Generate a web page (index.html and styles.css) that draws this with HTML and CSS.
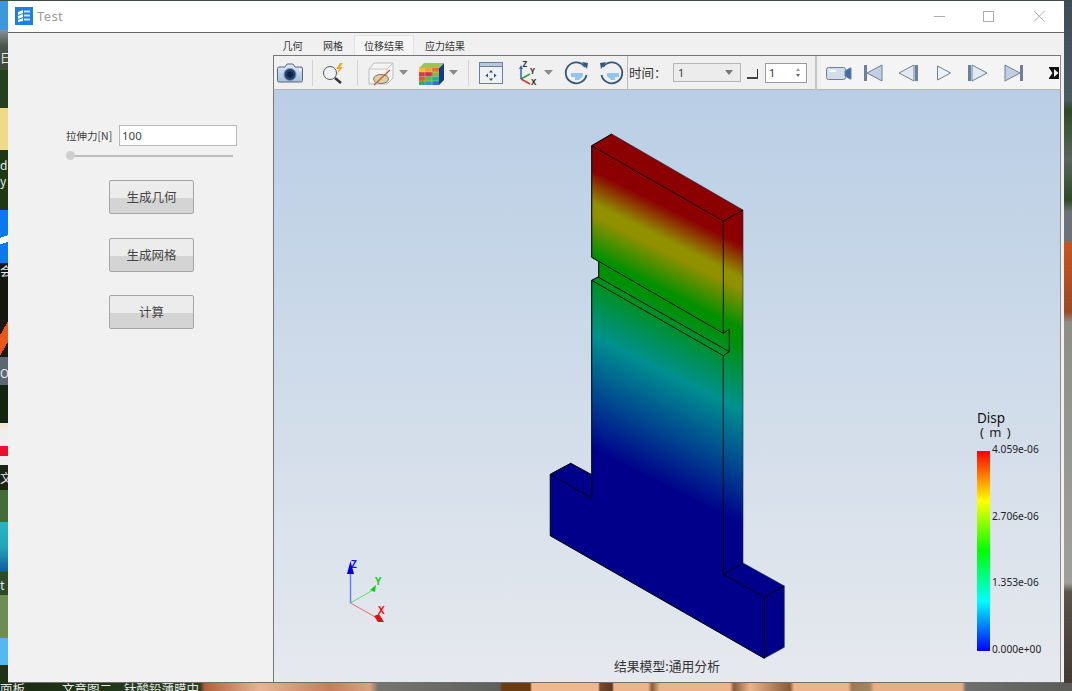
FILE: index.html
```html
<!DOCTYPE html>
<html lang="zh">
<head>
<meta charset="utf-8">
<title>Test</title>
<link rel="stylesheet" href="styles.css">
</head>
<body>
<div class="desktop">
  <div class="wall-left">
    <div class="wl wl-a"></div><div class="wl wl-b">日</div><div class="wl wl-c"></div><div class="wl wl-d"></div>
    <div class="wl wl-e">d<br>y</div><div class="wl wl-f"></div><div class="wl wl-g">会</div><div class="wl wl-h"></div>
    <div class="wl wl-i">O</div><div class="wl wl-c2"></div><div class="wl wl-j"></div><div class="wl wl-k">文</div>
    <div class="wl wl-c3"></div><div class="wl wl-l"></div><div class="wl wl-m">t</div><div class="wl wl-c4"></div>
    <div class="wl wl-n"></div><div class="wl wl-o"></div>
  </div>
  <div class="wall-right"></div>
  <div class="wall-top"></div>
  <div class="wall-bottom"><span class="dt1">面板</span><span class="dt2">文章图二</span><span class="dt3">钛酸铅薄膜中</span></div>

  <div class="window">
    <header class="titlebar">
      <svg class="appicon" width="18" height="18" viewBox="0 0 18 18"><rect width="18" height="18" fill="#1b7fe6"/><path d="M3 5l5-2v3l-5 2zM3 9l5-2v3l-5 2zM3 13l5-2v3l-5 1z" fill="#fff"/><path d="M9 3.500h6v2H9zM9 7.500h6v2H9zM9 11.500h6v2H9z" fill="#cfe4fa"/></svg>
      <span class="apptitle">Test</span>
      <div class="winctl">
        <svg class="wc" width="50" height="16" viewBox="0 0 50 16"><path d="M20 8.500h11" stroke="#adadad"/></svg>
        <svg class="wc" width="50" height="16" viewBox="0 0 50 16"><rect x="19.500" y="3.500" width="10" height="10" fill="none" stroke="#adadad"/></svg>
        <svg class="wc" width="50" height="16" viewBox="0 0 50 16"><path d="M20 3l10.500 10.500M30.500 3L20 13.500" stroke="#adadad" fill="none"/></svg>
      </div>
    </header>
    <div class="winbody">
      <aside class="leftpanel">
        <div class="paramrow">
          <label class="paramlabel">拉伸力[N]</label>
          <input class="paraminput" type="text" value="100">
        </div>
        <div class="slider"><span class="sliderthumb"></span></div>
        <button class="btn btn-first">生成几何</button>
        <button class="btn btn-second">生成网格</button>
        <button class="btn btn-third">计算</button>
      </aside>
      <main class="rightpane">
        <nav class="tabs">
          <span class="tab tab-1">几何</span>
          <span class="tab tab-2">网格</span>
          <span class="tab tab-active">位移结果</span>
          <span class="tab tab-4">应力结果</span>
        </nav>
        <div class="toolbar">
          <svg class="t-cam" width="32" height="24" viewBox="0 0 32 24"><defs><linearGradient id="cg" x1="0" y1="0" x2="0" y2="1"><stop offset="0" stop-color="#dfe9f5"/><stop offset="1" stop-color="#a9bfd9"/></linearGradient></defs><path d="M5 6h6l2-3h6l2 3h6q1.500 0 1.500 1.500v12q0 1.500-1.500 1.500H5q-1.500 0-1.500-1.500v-12Q3.500 6 5 6z" fill="url(#cg)" stroke="#54698a"/><circle cx="16" cy="13.500" r="6" fill="#20406f" stroke="#7d93b3"/><circle cx="16" cy="13.500" r="3" fill="#0e2146"/><circle cx="26" cy="9" r="1" fill="#fff"/></svg>
          <span class="sep sep-a"></span>
          <svg class="t-search" width="32" height="24" viewBox="0 0 32 24"><circle cx="13" cy="12" r="6.500" fill="#eef2f7" stroke="#555"/><path d="M18 17l6 5" stroke="#333" stroke-width="2.500"/><path d="M23 2l-4 6h3l-2 5 6-7h-3l3-4z" fill="#f2a72b"/></svg>
          <span class="sep sep-b"></span>
          <svg class="t-cube" width="44" height="24" viewBox="0 0 44 24"><path d="M7 8l5-6h19v15l-6 6H7z" fill="#f4f4f4" stroke="#bcbcbc"/><path d="M7 8h18v15M25 8l6-6" fill="none" stroke="#c8c8c8"/><ellipse cx="19" cy="18" rx="7.500" ry="4.500" fill="#d8d0a8" stroke="#777"/><path d="M12 24L28 9" stroke="#d9522f" stroke-width="1.200"/><path d="M37 9h9l-4.500 5z" fill="#8a8a8a"/></svg>
          <svg class="t-color" width="53" height="24" viewBox="0 0 53 24"><path d="M33 7l5-5v17l-5 5z" fill="#123a86"/><path d="M13 7l5-5h20l-5 5z" fill="#9ac654"/><rect x="13" y="7" width="20" height="17" fill="#2d6fd6"/><rect x="13" y="7" width="6.500" height="4" fill="#e6c42c"/><rect x="19.500" y="7" width="7" height="4" fill="#efa32a"/><rect x="26.500" y="7" width="6.500" height="4" fill="#e5752a"/><rect x="13" y="11" width="6.500" height="4.500" fill="#e03a2a"/><rect x="19.500" y="11" width="7" height="4.500" fill="#d9342a"/><rect x="26.500" y="11" width="6.500" height="4.500" fill="#8fb83a"/><rect x="13" y="15.500" width="6.500" height="4.500" fill="#e05a2a"/><rect x="19.500" y="15.500" width="7" height="4.500" fill="#62b735"/><rect x="26.500" y="15.500" width="6.500" height="4.500" fill="#2fae8b"/><rect x="13" y="20" width="6.500" height="4" fill="#2fae5b"/><rect x="19.500" y="20" width="7" height="4" fill="#2a9bd8"/><path d="M19 7v17M26 7v17M13 11h20M13 15.500h20M13 20h20" stroke="#fff" stroke-opacity=".25" fill="none"/><path d="M43 9h9l-4.500 5z" fill="#8a8a8a"/></svg>
          <span class="sep sep-c"></span>
          <svg class="t-fit" width="32" height="24" viewBox="0 0 32 24"><rect x="4.500" y="1.500" width="23" height="21" fill="#eef1f6" stroke="#6d7f9b"/><rect x="4.500" y="1.500" width="23" height="4" fill="#b8c8de" stroke="#6d7f9b"/><path d="M16 9l-2 2.500h4zM16 20l-2-2.500h4zM10.500 14.500l2.500-2v4zM21.500 14.500l-2.500-2v4z" fill="#2b4b78"/></svg>
          <svg class="t-axes" width="50" height="24" viewBox="0 0 50 24"><path d="M14 18V6" stroke="#2866c8" stroke-width="1.500"/><path d="M14 18l9-5" stroke="#1fa24a" stroke-width="1.500"/><path d="M14 18l9 5" stroke="#d9342a" stroke-width="1.500"/><path d="M14 4l-2 4h4z" fill="#2866c8"/><text x="15.500" y="6" class="axl">Z</text><text x="23" y="13" class="axl">Y</text><text x="24" y="24" class="axl">X</text><path d="M37 9h9l-4.500 5z" fill="#8a8a8a"/></svg>
          <svg class="t-rot1" width="36" height="24" viewBox="0 0 36 24"><path d="M27 6A10.500 10.500 0 1 0 28.500 14" fill="none" stroke="#33587f" stroke-width="1.800"/><path d="M24 1l6 1-1 6z" fill="#33587f"/><path d="M13 12h12v3l-4 4h-4v-3h-4z" fill="#8fc6ee"/></svg>
          <svg class="t-rot2" width="30" height="24" viewBox="0 0 30 24"><path d="M6 6A10.500 10.500 0 1 1 4.500 14" fill="none" stroke="#33587f" stroke-width="1.800"/><path d="M9 1L3 2l1 6z" fill="#33587f"/><path d="M10 12h12v4h-4v3h-4l-4-4z" fill="#8fc6ee"/></svg>
          <span class="sep sep-d"></span>
          <span class="timelabel">时间：</span>
          <span class="combo"><span>1</span><i class="comboarrow"></i></span>
          <span class="stepslot"><i class="stepicon"></i></span>
          <span class="spin"><span>1</span><span class="spinbtns"><i class="up"></i><i class="down"></i></span></span>
          <span class="sep sep-e"></span>
          <div class="playbar">
            <svg class="p-rec" width="36" height="20" viewBox="0 0 36 20"><rect x="5.500" y="4.500" width="19" height="12" rx="2" fill="#d3dce9" stroke="#6d7f9b"/><rect x="8" y="7" width="7" height="2" fill="#fff"/><path d="M24 8l5-3h1v11h-1l-5-3z" fill="#3d6ea8" stroke="#6d7f9b"/></svg>
            <svg class="p-icon" width="34" height="20" viewBox="0 0 34 20"><path d="M8.500 2v16" stroke="#6d7f9b" stroke-width="3"/><path d="M10 10L25 2v16z" fill="#c2cfe0" stroke="#6d7f9b"/></svg>
            <svg class="p-icon" width="34" height="20" viewBox="0 0 34 20"><path d="M25.500 2v16" stroke="#6d7f9b" stroke-width="3"/><path d="M23 2v16L8 10z" fill="#e3e9f1" stroke="#6d7f9b"/></svg>
            <svg class="p-icon p-play" width="34" height="20" viewBox="0 0 34 20"><path d="M10.500 3l13 7-13 7z" fill="#eef1f6" stroke="#6d7f9b"/></svg>
            <svg class="p-icon" width="34" height="20" viewBox="0 0 34 20"><path d="M8.500 2v16" stroke="#6d7f9b" stroke-width="3"/><path d="M11 2v16l15-8z" fill="#e3e9f1" stroke="#6d7f9b"/></svg>
            <svg class="p-icon p-last" width="34" height="20" viewBox="0 0 34 20"><path d="M25.500 2v16" stroke="#6d7f9b" stroke-width="3"/><path d="M9 2v16l15-8z" fill="#c2cfe0" stroke="#6d7f9b"/></svg>
            <svg class="p-more" width="10" height="12" viewBox="0 0 10 12"><rect width="10" height="12" fill="#111"/><path d="M0 1l3.500 5L0 11zM5 2l4.500 4L5 10z" fill="#f2f2f2"/></svg>
          </div>
        </div>
        <div class="viewport">
          <svg class="scene" width="787" height="591" viewBox="273 90 787 591">
            <defs>
              <linearGradient id="disp" gradientUnits="userSpaceOnUse" x1="592" y1="100" x2="392" y2="500">
                <stop offset="0.14" stop-color="#8b0000"/>
                <stop offset="0.205" stop-color="#909000"/>
                <stop offset="0.23" stop-color="#909000"/>
                <stop offset="0.31" stop-color="#009000"/>
                <stop offset="0.33" stop-color="#009000"/>
                <stop offset="0.47" stop-color="#009090"/>
                <stop offset="0.6" stop-color="#004090"/>
                <stop offset="0.7" stop-color="#00008b"/>
              </linearGradient>
            </defs>
            <polygon class="body3d" points="591.700,145.700 611.700,134 743,210 743,563 784.300,586 784.300,647.300 764.300,658.300 550.300,535.700 550.300,474.300 570.700,463.300 591.700,474.700 591.700,280.300 598.700,276.700 598.700,261.700 591.700,257.300"/>
            <path class="edges" d="M611.700 134L591.700 145.700V257.300L723.300 333.300V221L591.700 145.700M723.300 221L743 210M723.300 333.300L729.300 329.300V351.700L598 277M598.700 261.700V276.700L591.700 280.300L723.300 355.700L729.300 351.700M723.300 355.700V574.300L764.300 597.300L784.300 586M764.300 597.300V658.300L550.300 535.700V474.300L591.700 498.300V280.300M723.300 574.300L743 563M550.300 474.300L570.700 463.300L591.700 474.700"/>
            <path class="axis-z" d="M350.500 603V570"/><path class="axis-y" d="M350.500 603L373 590"/><path class="axis-x" d="M350.500 603L377 618"/>
            <path d="M350.500 561l3.500 13h-7z" fill="#0000e0"/><path d="M370 590l6-5-1 7z" fill="#11cc11"/><path d="M374 616l5-2 5 8-6 0z" fill="#e01010"/>
            <text class="tri tri-z" x="351" y="568">Z</text><text class="tri tri-y" x="375" y="585">Y</text><text class="tri tri-x" x="378" y="614">X</text>
          </svg>
          <div class="legend">
            <div class="legtitle">Disp</div>
            <div class="legunit">( m )</div>
            <div class="legrow">
              <div class="legbar"></div>
              <div class="legvals"><span>4.059e-06</span><span>2.706e-06</span><span>1.353e-06</span><span>0.000e+00</span></div>
            </div>
          </div>
          <div class="caption">结果模型:通用分析</div>
        </div>
      </main>
    </div>
  </div>
</div>
</body>
</html>
```
FILE: styles.css
```css
* { box-sizing: border-box; }
html, body { margin: 0; padding: 0; }
body { width: 1072px; height: 691px; overflow: hidden; font-family: "Noto Sans CJK SC", "Noto Sans", sans-serif; color: #333; }

.desktop { position: relative; width: 1072px; height: 691px; overflow: hidden; background: #26331e; }

/* Wallpaper and desktop icons peeking round the window */
.wall-left { position: absolute; left: 0; top: 0; width: 8px; height: 684px; display: flex; flex-direction: column; overflow: hidden; font-size: 12px; line-height: 16px; color: #e8e8e8; }
.wl { flex: none; overflow: hidden; }
.wl-a { height: 30px; background: #3c97dd; }
.wl-b { height: 40px; padding-top: 20px; background: linear-gradient(#8a9298, #4a5648 40%, #3a4a35); }
.wl-c { height: 38px; background: #24401f; }
.wl-d { height: 42px; background: #f1d98a; }
.wl-e { height: 60px; padding-top: 7px; background: #1e3814; }
.wl-f { height: 53px; background: linear-gradient(160deg, #0b78ee 50%, #fff 50%, #fff 62%, #0b78ee 62%); }
.wl-g { height: 57px; background: #14160f; }
.wl-h { height: 37px; background: linear-gradient(120deg, #1b1b14 30%, #e9571b 30%, #e9571b 70%, #1b1b14 70%); }
.wl-i { height: 28px; padding-top: 8px; background: #5d6672; }
.wl-c2 { height: 38px; background: #13240f; }
.wl-j { height: 42px; background: linear-gradient(#f2e8c8 0, #eee 20%, #eee 55%, #e8112d 55%, #e8112d 78%, #eee 78%); }
.wl-k { height: 25px; padding-top: 5px; background: #1c2616; }
.wl-c3 { height: 32px; background: #456b3a; }
.wl-l { height: 50px; background: linear-gradient(#29b6c8 0, #23a5b7 50%, #0e5aa6 100%); }
.wl-m { height: 23px; padding-top: 5px; background: #2d4b2a; }
.wl-c4 { height: 43px; background: #6d8d54; }
.wl-n { height: 27px; background: #55b8f0; }
.wl-o { height: 18px; background: #1f3417; }

.wall-right { position: absolute; left: 1064px; top: 0; width: 8px; height: 691px; background: linear-gradient(#3e4c58 0, #4b5a60 100px, #2f4a26 110px, #59665d 160px, #2f4a26 200px, #6b7378 212px, #6b7378 240px, #c8541f 244px, #9a4a26 312px, #8e8e88 322px, #a0a09a 583px, #59534a 592px, #3f3830 691px); }
.wall-top { position: absolute; left: 0; top: 0; width: 1072px; height: 1px; background: #3f4a45; }
.wall-bottom { position: absolute; left: 0; top: 683px; width: 1072px; height: 8px; overflow: hidden; font-size: 12.500px; line-height: 16px; color: #e6e6e6; white-space: nowrap;
  background: linear-gradient(90deg, #1a2c14 0, #2a3f20 200px, #b45f3c 205px, #e8b494 260px, #c77d5c 330px, #d9a27f 370px, #77756f 378px, #5f5f5d 500px, #6b3c12 502px, #6b3c12 530px, #f0b88e 532px, #f0b88e 598px, #7a4a2c 600px, #5a3a20 612px, #edb48b 614px, #edb48b 648px, #8c5a36 652px, #edb48b 660px, #edb48b 730px, #8a5a38 734px, #edb48b 750px, #8a5a38 790px, #edb48b 794px, #edb48b 848px, #9c7a55 852px, #a58660 870px, #e8ae85 874px, #e8ae85 962px, #6f6f6d 966px, #5b5b58 1072px); }
.wall-bottom span { position: absolute; top: -2px; }
.dt1 { left: 0; }
.dt2 { left: 62px; }
.dt3 { left: 124px; }

/* Window */
.window { position: absolute; left: 8px; top: 1px; width: 1056px; height: 682px; display: flex; flex-direction: column; background: #f0f0f0; border-bottom: 1px solid #6f6f6f; }
.titlebar { flex: none; height: 32px; display: flex; align-items: center; background: #fff; border-bottom: 1px solid #666; padding-left: 7px; padding-bottom: 1px; }
.appicon { flex: none; }
.apptitle { margin-left: 4px; font-family: "Noto Sans", sans-serif; font-size: 13px; letter-spacing: 0.400px; color: #9b9b9b; }
.winctl { margin-left: auto; display: flex; align-items: center; margin-top: -1px; }
.wc { display: block; flex: none; }

.winbody { flex: 1; display: flex; min-height: 0; }

/* Left panel */
.leftpanel { flex: none; width: 265px; padding-top: 92px; display: flex; flex-direction: column; align-items: flex-start; background: #f1f1f1; }
.paramrow { display: flex; align-items: center; padding-left: 58px; }
.paramlabel { width: 53px; font-size: 10.500px; color: #3d3d3d; white-space: nowrap; }
.paraminput { width: 118px; height: 21px; padding: 0 2px; border: 1px solid #b9b9b9; border-radius: 0; outline: none; background: #fff; font-family: "Noto Sans", sans-serif; font-size: 11.500px; color: #444; }
.slider { position: relative; margin: 9px 0 0 58px; width: 167px; height: 2px; background: #bdbdbd; }
.sliderthumb { position: absolute; left: 0; top: -4px; width: 9px; height: 9px; border-radius: 50%; background: #cfcfcf; }
.btn { width: 85px; height: 34px; margin-left: 101px; border: 1px solid #a6a6a6; border-radius: 2px; padding: 0 0 1px; font-family: "Noto Sans CJK SC", sans-serif; font-size: 12.500px; color: #444; background: linear-gradient(#ececec 0, #ececec 53%, #d4d4d4 53%, #d4d4d4 100%); }
.btn-first { margin-top: 23px; }
.btn-second { margin-top: 24px; }
.btn-third { margin-top: 23px; }

/* Right pane */
.rightpane { flex: 1; min-width: 0; display: flex; flex-direction: column; padding-right: 3px; }
.tabs { flex: none; height: 22px; display: flex; align-items: flex-end; font-size: 10px; color: #333; }
.tab { display: flex; align-items: center; justify-content: center; height: 20px; }
.tab-1 { width: 39px; }
.tab-2 { width: 42px; }
.tab-active { width: 60px; background: #f5f5f5; border: 1px solid #e4e4e4; border-bottom: 0; }
.tab-4 { width: 62px; }

.toolbar { flex: none; height: 35px; display: flex; align-items: center; background: #f0f0f0; border-top: 1px solid #767676; border-left: 1px solid #767676; border-right: 1px solid #8a8a8a; border-bottom: 1px solid #b4b4b4; }
.toolbar svg { display: block; flex: none; overflow: visible; }
.axl { font-family: "Noto Sans", sans-serif; font-size: 8px; fill: #333; font-weight: 700; }
.sep { flex: none; width: 1px; height: 26px; background: #d2d2d2; }
.sep-a { margin: 0 4px 0 6px; }
.sep-b { margin: 0 4px 0 8px; }
.sep-c { margin: 0 6px 0 9px; }
.sep-d { height: 34px; background: #b8b8b8; margin-left: 0; }
.sep-e { height: 34px; width: 2px; background: #c4c4c4; margin: 0 4px 0 8px; }
.t-rot1 { margin-left: 1px; }
.t-rot2 { margin-left: 3px; }
.timelabel { flex: none; width: 45px; font-size: 12.500px; color: #333; padding-left: 1px; white-space: nowrap; overflow: hidden; }
.combo { flex: none; width: 68px; height: 19px; display: flex; align-items: center; justify-content: space-between; padding: 0 7px 0 4px; border: 1px solid #b5b5b5; background: #ececec; font-family: "Noto Sans", sans-serif; font-size: 11px; color: #444; }
.comboarrow { width: 0; height: 0; border-left: 4px solid transparent; border-right: 4px solid transparent; border-top: 5px solid #777; }
.stepslot { flex: none; width: 24px; display: flex; justify-content: center; }
.stepicon { display: block; width: 11px; height: 10px; margin-top: 2px; margin-right: 1px; border-right: 1px solid #333; border-bottom: 2px solid #444; }
.spin { flex: none; width: 42px; height: 20px; display: flex; align-items: center; justify-content: space-between; padding: 0 6px 0 3px; border: 1px solid #9a9a9a; background: #fff; font-family: "Noto Sans", sans-serif; font-size: 11px; color: #333; }
.spinbtns { display: flex; flex-direction: column; gap: 3px; }
.up { width: 0; height: 0; border-left: 2.500px solid transparent; border-right: 2.500px solid transparent; border-bottom: 3px solid #999; }
.down { width: 0; height: 0; border-left: 2.500px solid transparent; border-right: 2.500px solid transparent; border-top: 3px solid #666; }
.playbar { flex: 1; min-width: 0; height: 33px; display: flex; align-items: center; background: #f4f4f4; }
.p-play { margin-left: 2px; }
.p-last { margin-left: 1px; }
.p-more { margin-left: auto; margin-right: 1px; }

/* 3D view */
.viewport { position: relative; flex: 1; min-height: 0; overflow: hidden; border-left: 1px solid #767676; border-right: 1px solid #8a8a8a; background: linear-gradient(#b9cee5 0, #e6e9ee 100%); }
.scene { position: absolute; left: -1px; top: 0; display: block; }
.body3d { fill: url(#disp); stroke: #1a2a3a; stroke-width: 0.600; }
.edges { fill: none; stroke: #000; stroke-width: 0.900; }
.axis-z { stroke: #6f7ff0; stroke-width: 1.500; fill: none; }
.axis-y { stroke: #5fe05f; stroke-width: 1; fill: none; }
.axis-x { stroke: #ee6a6a; stroke-width: 1; fill: none; }
.tri { font-family: "Noto Sans", sans-serif; font-size: 10px; font-weight: 700; }
.tri-z { fill: #1a1ad0; }
.tri-y { fill: #22cc22; }
.tri-x { fill: #e01818; }

.legend { position: absolute; left: 703px; top: 321px; width: 80px; }
.legtitle { font-family: "Noto Sans", sans-serif; font-size: 13.500px; line-height: 14px; color: #111; }
.legunit { font-family: "Noto Sans", sans-serif; font-size: 13px; line-height: 15px; word-spacing: 2px; margin-left: 3px; color: #222; white-space: nowrap; }
.legrow { display: flex; margin-top: 11px; }
.legbar { flex: none; width: 13px; height: 200px; background: linear-gradient(#ff0000 0, #ffff00 25%, #00ff00 50%, #00ffff 75%, #0000ff 100%); }
.legvals { flex: none; height: 212px; margin-top: -8px; margin-left: 2px; display: flex; flex-direction: column; justify-content: space-between; font-family: "Noto Sans", sans-serif; font-size: 10.200px; line-height: 12px; color: #222; white-space: nowrap; }
.caption { position: absolute; left: 340px; top: 567px; font-size: 12.800px; line-height: 18px; color: #333; white-space: nowrap; }
```
